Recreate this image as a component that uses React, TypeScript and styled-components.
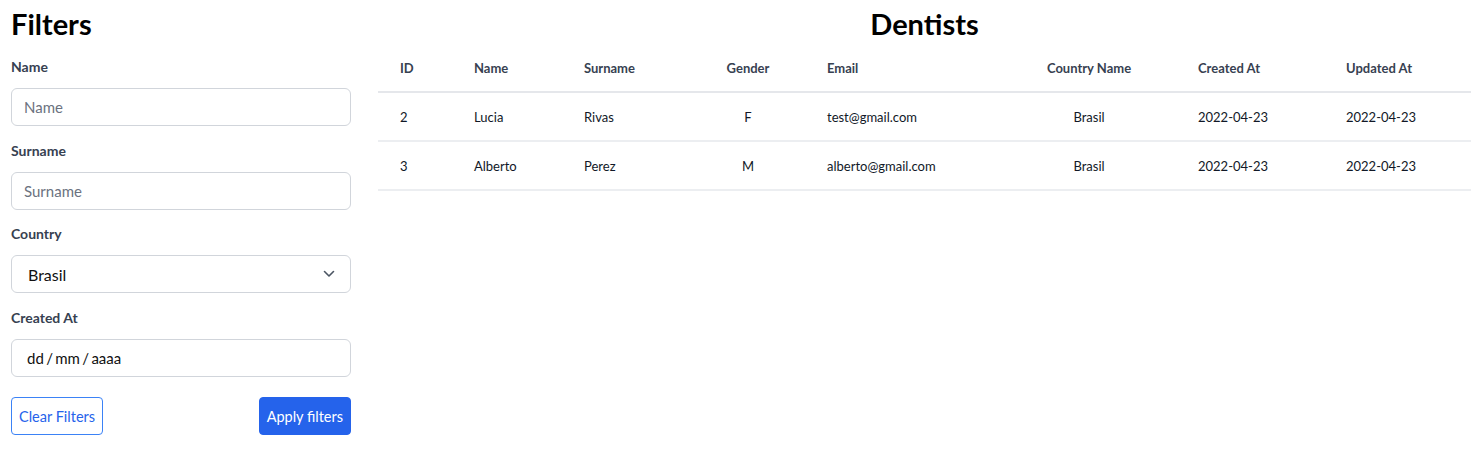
import React from "react";
import styled, { createGlobalStyle } from "styled-components";

const Global = createGlobalStyle`
  * { box-sizing: border-box; }
  html, body { margin: 0; padding: 0; background: #ffffff; }
  body { font-family: "Lato", "Open Sans", sans-serif; color: #111827; }
`;

const Page = styled.div`
  display: grid;
  grid-template-columns: 340px 1fr;
  column-gap: 27px;
  padding: 8px 0 0 11px;
  width: 1471px;
`;

const Sidebar = styled.aside`
  display: flex;
  flex-direction: column;
`;

const Heading = styled.h1<{ $center?: boolean }>`
  margin: 0;
  font-size: 29px;
  line-height: 32px;
  font-weight: 700;
  color: #000;
  text-align: ${(p) => (p.$center ? "center" : "left")};
`;

const Field = styled.div`
  display: flex;
  flex-direction: column;
  gap: 11px;
  margin-top: 17px;
  & + & { margin-top: 15px; }
  &:nth-of-type(3) { margin-top: 14px; }
`;

const Label = styled.label`
  font-size: 14px;
  line-height: 20px;
  font-weight: 700;
  color: #374151;
`;

const Input = styled.input`
  height: 38px;
  width: 100%;
  border: 1px solid #d1d5db;
  border-radius: 6px;
  padding: 0 12px;
  font-family: inherit;
  font-size: 15px;
  color: #111827;
  background: #fff;
  outline: none;
  &::placeholder { color: #6b7280; }
`;

const DateBox = styled.div`
  height: 38px;
  border: 1px solid #d1d5db;
  border-radius: 6px;
  padding: 0 15px;
  display: flex;
  align-items: center;
  font-size: 15px;
  word-spacing: -1.5px;
  color: #111;
`;

const SelectBox = styled.div`
  height: 38px;
  border: 1px solid #d1d5db;
  border-radius: 6px;
  padding: 0 15px 0 16px;
  display: flex;
  align-items: center;
  justify-content: space-between;
  font-size: 16px;
  color: #111;
`;

const Actions = styled.div`
  display: flex;
  justify-content: space-between;
  margin-top: 20px;
`;

const Button = styled.button<{ $primary?: boolean }>`
  height: 38px;
  padding: 0 7px;
  border-radius: 4px;
  font-family: inherit;
  font-size: 14.5px;
  cursor: pointer;
  border: 1px solid ${(p) => (p.$primary ? "#2563eb" : "#3b82f6")};
  background: ${(p) => (p.$primary ? "#2563eb" : "#fff")};
  color: ${(p) => (p.$primary ? "#fff" : "#2563eb")};
`;

const Main = styled.main`
  display: flex;
  flex-direction: column;
`;

const Table = styled.table`
  margin-top: 5px;
  width: 100%;
  border-collapse: collapse;
  table-layout: fixed;
  font-size: 13px;
`;

const Th = styled.th<{ $w: number; $center?: boolean }>`
  width: ${(p) => p.$w}px;
  text-align: ${(p) => (p.$center ? "center" : "left")};
  padding: 0 22px;
  height: 47px;
  font-weight: 700;
  color: #374151;
  border-bottom: 2px solid #e5e7eb;
`;

const Td = styled.td<{ $center?: boolean }>`
  text-align: ${(p) => (p.$center ? "center" : "left")};
  padding: 0 22px;
  height: 49px;
  color: #111827;
  border-bottom: 2px solid #eceef1;
`;

const cols = [
  { label: "ID", w: 74 },
  { label: "Name", w: 110 },
  { label: "Surname", w: 129 },
  { label: "Gender", w: 114, center: true },
  { label: "Email", w: 197 },
  { label: "Country Name", w: 174, center: true },
  { label: "Created At", w: 148 },
  { label: "Updated At", w: 147 },
];

const rows = [
  ["2", "Lucia", "Rivas", "F", "test@gmail.com", "Brasil", "2022-04-23", "2022-04-23"],
  ["3", "Alberto", "Perez", "M", "alberto@gmail.com", "Brasil", "2022-04-23", "2022-04-23"],
];

const Chevron = () => (
  <svg width="12" height="8" viewBox="0 0 12 8" fill="none">
    <path d="M1.5 1.5 L6 6 L10.5 1.5" stroke="#4b5563" strokeWidth="1.6" strokeLinecap="round" strokeLinejoin="round" />
  </svg>
);

export default function App() {
  return (
    <>
      <Global />
      <Page>
        <Sidebar>
          <Heading>Filters</Heading>
          <Field>
            <Label>Name</Label>
            <Input placeholder="Name" />
          </Field>
          <Field>
            <Label>Surname</Label>
            <Input placeholder="Surname" />
          </Field>
          <Field>
            <Label>Country</Label>
            <SelectBox>
              <span>Brasil</span>
              <Chevron />
            </SelectBox>
          </Field>
          <Field>
            <Label>Created At</Label>
            <DateBox>dd / mm / aaaa</DateBox>
          </Field>
          <Actions>
            <Button>Clear Filters</Button>
            <Button $primary>Apply filters</Button>
          </Actions>
        </Sidebar>
        <Main>
          <Heading $center>Dentists</Heading>
          <Table>
            <thead>
              <tr>
                {cols.map((c) => (
                  <Th key={c.label} $w={c.w} $center={c.center}>
                    {c.label}
                  </Th>
                ))}
              </tr>
            </thead>
            <tbody>
              {rows.map((r) => (
                <tr key={r[0]}>
                  {r.map((v, i) => (
                    <Td key={i} $center={cols[i].center}>
                      {v}
                    </Td>
                  ))}
                </tr>
              ))}
            </tbody>
          </Table>
        </Main>
      </Page>
    </>
  );
}
